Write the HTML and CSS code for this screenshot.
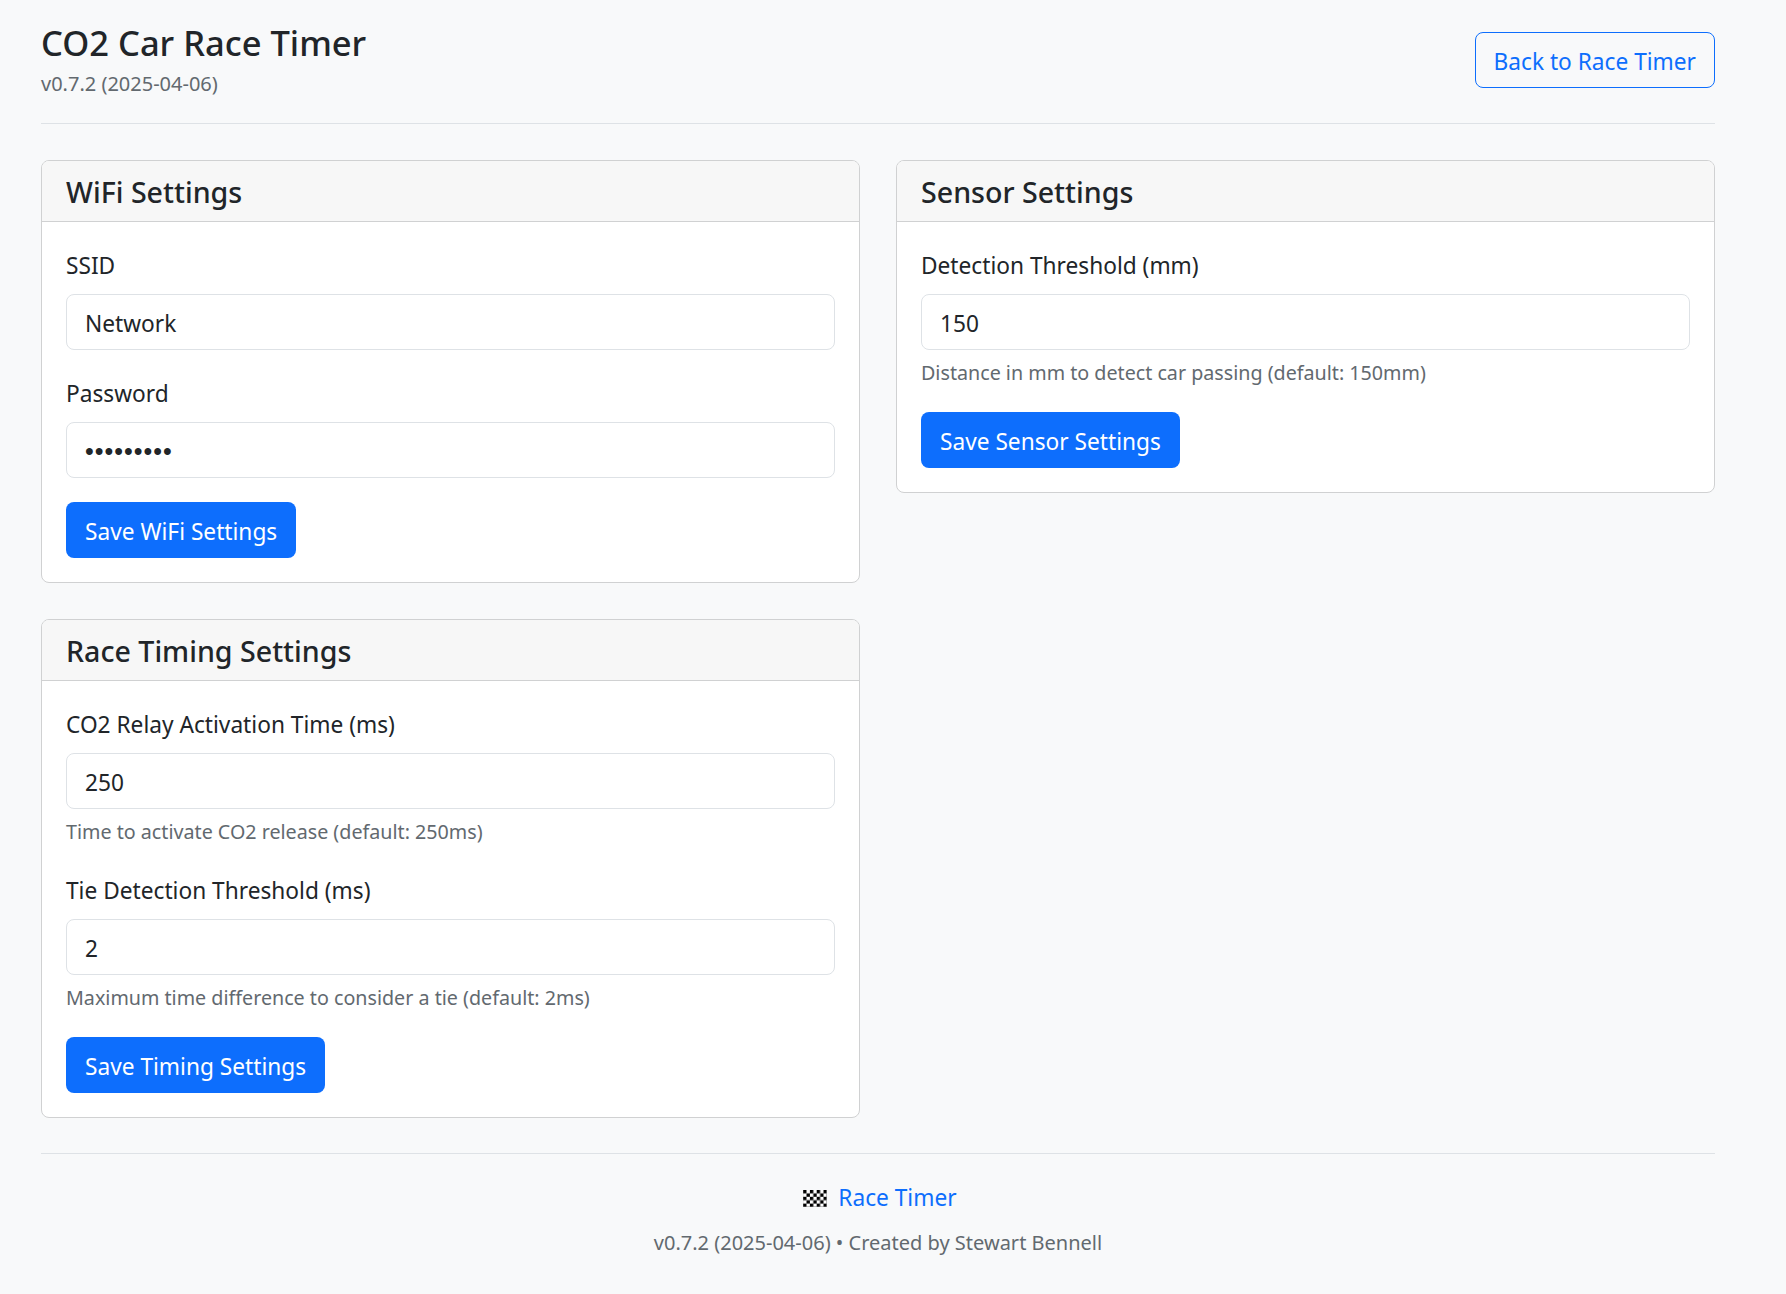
FILE: index.html
```html
<!DOCTYPE html>
<html lang="en">
<head>
  <meta charset="UTF-8">
  <title>CO2 Car Race Timer - Settings</title>
  <link rel="stylesheet" href="styles.css">
</head>
<body>
  <div class="container">
    <header class="page-header">
      <div>
        <h1>CO2 Car Race Timer</h1>
        <p class="version">v0.7.2 (2025-04-06)</p>
      </div>
      <a class="btn btn-outline" href="#">Back to Race Timer</a>
    </header>

    <main class="columns">
      <div class="column">
        <section class="card">
          <h2 class="card-header">WiFi Settings</h2>
          <form class="card-body">
            <div class="field">
              <label for="ssid">SSID</label>
              <input id="ssid" type="text" value="Network">
            </div>
            <div class="field">
              <label for="password">Password</label>
              <input id="password" type="password" value="123456789">
            </div>
            <button class="btn btn-primary" type="button">Save WiFi Settings</button>
          </form>
        </section>

        <section class="card">
          <h2 class="card-header">Race Timing Settings</h2>
          <form class="card-body">
            <div class="field">
              <label for="relay">CO2 Relay Activation Time (ms)</label>
              <input id="relay" type="number" value="250">
              <small>Time to activate CO2 release (default: 250ms)</small>
            </div>
            <div class="field">
              <label for="tie">Tie Detection Threshold (ms)</label>
              <input id="tie" type="number" value="2">
              <small>Maximum time difference to consider a tie (default: 2ms)</small>
            </div>
            <button class="btn btn-primary" type="button">Save Timing Settings</button>
          </form>
        </section>
      </div>

      <div class="column">
        <section class="card">
          <h2 class="card-header">Sensor Settings</h2>
          <form class="card-body">
            <div class="field">
              <label for="threshold">Detection Threshold (mm)</label>
              <input id="threshold" type="number" value="150">
              <small>Distance in mm to detect car passing (default: 150mm)</small>
            </div>
            <button class="btn btn-primary" type="button">Save Sensor Settings</button>
          </form>
        </section>
      </div>
    </main>

    <footer class="page-footer">
      <p class="footer-link">
        <svg class="flag" viewBox="0 0 7 5" aria-hidden="true">
          <defs>
            <pattern id="checks" width="2" height="2" patternUnits="userSpaceOnUse">
              <rect width="2" height="2" fill="#fff"/>
              <rect width="1" height="1" fill="#000"/>
              <rect x="1" y="1" width="1" height="1" fill="#000"/>
            </pattern>
          </defs>
          <rect width="7" height="5" fill="url(#checks)"/>
        </svg>
        <a href="#">Race Timer</a>
      </p>
      <p class="credit">v0.7.2 (2025-04-06) • Created by Stewart Bennell</p>
    </footer>
  </div>
</body>
</html>
```

FILE: styles.css
```css
* { box-sizing: border-box; }

body {
  margin: 0;
  background: #f8f9fa;
  color: #212529;
  font-family: "Noto Sans", "Liberation Sans", sans-serif;
  font-size: 22.7px;
  line-height: 1.5;
}

a { color: #0d6efd; text-decoration: none; }

.container {
  width: 1674px;
  margin-left: 41px;
  padding: 16px 0 35px;
}

/* Header */
.page-header {
  display: flex;
  justify-content: space-between;
  align-items: center;
  height: 108px;
  padding-bottom: 20px;
  border-bottom: 1px solid #dee2e6;
}

.page-header h1 {
  margin: 0;
  font-size: 34.5px;
  font-weight: 500;
  line-height: 48px;
}

.version {
  margin: 0;
  color: #62696f;
  font-size: 20px;
  line-height: 33px;
}

/* Buttons */
.btn {
  display: inline-block;
  height: 56px;
  padding: 4px 18px 0;
  border: 1px solid transparent;
  border-radius: 8px;
  font-family: inherit;
  font-size: 22.7px;
  line-height: 50px;
}

.btn-outline { border-color: #0d6efd; color: #0d6efd; }
.btn-primary { background: #0d6efd; color: #fff; }

/* Cards */
.columns {
  display: flex;
  gap: 36px;
  align-items: flex-start;
  margin-top: 36px;
}

.column {
  flex: 1;
  display: flex;
  flex-direction: column;
  gap: 36px;
}

.card {
  background: #fff;
  border: 1px solid #d0d1d2;
  border-radius: 8px;
  overflow: hidden;
}

.card-header {
  margin: 0;
  height: 61px;
  padding: 0 24px;
  background: #f7f7f7;
  border-bottom: 1px solid #d0d1d2;
  font-size: 28.6px;
  font-weight: 500;
  line-height: 62px;
}

.card-body {
  padding: 24px;
}

/* Form fields */
.field { margin-bottom: 24px; }

label {
  display: block;
  height: 40px;
  margin-bottom: 8px;
  line-height: 40px;
}

input {
  display: block;
  width: 100%;
  height: 56px;
  padding: 2px 18px 0;
  background: #fff;
  border: 1px solid #dee2e6;
  border-radius: 8px;
  color: #212529;
  font-family: inherit;
  font-size: 22.7px;
}

input[type="number"] { appearance: textfield; }

input[type="password"] {
  font-family: "Liberation Sans", sans-serif;
  font-size: 25px;
  letter-spacing: 1px;
}

small {
  display: block;
  margin-top: 8px;
  color: #62696f;
  font-size: 19.7px;
  line-height: 30px;
}

/* Footer */
.page-footer {
  margin-top: 35px;
  padding-top: 21px;
  border-top: 1px solid #dee2e6;
  text-align: center;
}

.page-footer p { margin: 0; }

.footer-link {
  height: 45px;
  padding-left: 4px;
  line-height: 45px;
}

.flag {
  width: 24px;
  height: 17px;
  margin-right: 5px;
  vertical-align: -1px;
}

.credit {
  color: #62696f;
  font-size: 20px;
  line-height: 45px;
}
```
